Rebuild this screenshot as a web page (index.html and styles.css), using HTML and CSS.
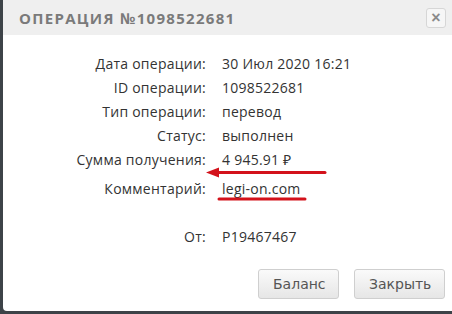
FILE: index.html
```html
<!DOCTYPE html>
<html lang="ru">
  <head>
    <meta charset="UTF-8" />
    <title>Операция</title>
    <link rel="stylesheet" href="styles.css">
  </head>
  <body>
    <div class="modal">
      <div class="modal-header">
        <h2>Операция №1098522681</h2>
        <button class="close-btn" type="button">&times;</button>
      </div>
      <div class="modal-body">
        <div class="details">
          <div class="label">Дата операции:</div>
          <div class="value">30 Июл 2020 16:21</div>
          <div class="label">ID операции:</div>
          <div class="value">1098522681</div>
          <div class="label">Тип операции:</div>
          <div class="value">перевод</div>
          <div class="label">Статус:</div>
          <div class="value">выполнен</div>
          <div class="label">Сумма получения:</div>
          <div class="value">4 945.91 ₽</div>
          <div class="label comment">Комментарий:</div>
          <div class="value comment">legi-on.com</div>
          <div class="label from">От:</div>
          <div class="value from">P19467467</div>
        </div>
      </div>
      <div class="modal-footer">
        <button type="button" class="btn">Баланс</button>
        <button type="button" class="btn">Закрыть</button>
      </div>

      <!-- red marks drawn over the screenshot -->
      <svg class="marks" width="452" height="314" viewBox="0 0 452 314">
        <line x1="216" y1="172.5" x2="325" y2="172.5" stroke="#d3121b" stroke-width="3" stroke-linecap="round" />
        <polygon points="206,172.5 219,167.5 219,177.5" fill="#d3121b" />
        <line x1="219" y1="199" x2="305" y2="199" stroke="#d3121b" stroke-width="3" stroke-linecap="round" />
      </svg>
    </div>
  </body>
</html>
```

FILE: styles.css
```css
/* CSS styles */
body {
  margin: 0;
  padding: 0;
  background-color: #3d4348;
  font-family: "Open Sans", Arial, sans-serif;
}

.modal {
  position: relative;
  margin-left: 3px;
  width: 449px;
  height: 311px;
  background-color: #fff;
  border-bottom-left-radius: 4px;
  overflow: hidden;
}

.modal-header {
  display: flex;
  align-items: center;
  justify-content: space-between;
  height: 35px;
  padding: 0 6px 0 16px;
  background-color: #efefef;
}

.modal-header h2 {
  margin: 0;
  font-size: 15px;
  font-weight: bold;
  text-transform: uppercase;
  letter-spacing: 1.3px;
  color: #7a7a7a;
}

.close-btn {
  width: 20px;
  height: 20px;
  padding: 0;
  border: 1px solid #d6d6d6;
  border-radius: 3px;
  background-color: #f6f6f6;
  color: #8a8a8a;
  font-size: 16px;
  font-weight: bold;
  line-height: 16px;
}

.modal-body {
  padding: 17px 0 0;
}

.details {
  display: grid;
  grid-template-columns: 203px 1fr;
  column-gap: 16px;
  grid-auto-rows: 24px;
  font-size: 14px;
  line-height: 24px;
  letter-spacing: 0.25px;
  color: #333;
}

.label {
  text-align: right;
}

.comment {
  margin-top: 5px;
}

.from {
  margin-top: 29px;
}

.modal-footer {
  display: flex;
  justify-content: flex-end;
  gap: 15px;
  padding: 49px 7px 0 0;
}

.btn {
  height: 30px;
  padding: 0 14px;
  border: 1px solid #cfcfcf;
  border-radius: 3px;
  background: linear-gradient(#fafafa, #e6e6e6);
  color: #555;
  font-family: "DejaVu Sans", Verdana, sans-serif;
  font-size: 14px;
}

.btn:first-child {
  width: 81px;
}

.btn:last-child {
  width: 91px;
}

.marks {
  position: absolute;
  left: -3px;
  top: 0;
  pointer-events: none;
}
```
